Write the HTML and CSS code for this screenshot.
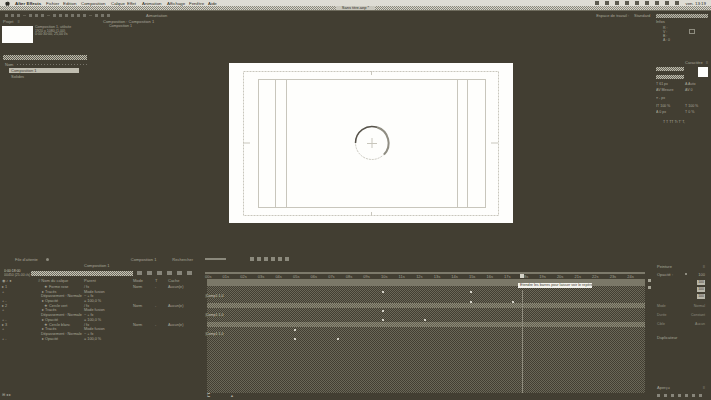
FILE: index.html
```html
<!DOCTYPE html>
<html lang="fr">
<head>
    <meta charset="UTF-8">
    <meta name="viewport" content="width=device-width, initial-scale=1.0">
    <title>After Effects</title>
    <link rel="stylesheet" href="styles.css">
</head>
<body>
    <div class="page">
        <!-- system menu -->
        <div class="menubar">
            <svg class="apple" width="5" height="5" viewBox="0 0 5 5"><path d="M2.5 1.2C1.6.7.4 1 .4 2.4c0 1.2.8 2.4 1.3 2.4.4 0 .5-.2.8-.2s.4.2.8.2c.5 0 1.3-1.200 1.300-2.400C4.600 1 3.400.7 2.500 1.200zM2.500 1C2.500.5 2.900.1 3.300 0c0 .5-.4 1-.8 1z" fill="#2b2a24"/></svg>
            <b class="app">After Effects</b>
            <span class="m1">Fichier</span>
            <span class="m2">Edition</span>
            <span class="m3">Composition</span>
            <span class="m4">Calque</span>
            <span class="m5">Effet</span>
            <span class="m6">Animation</span>
            <span class="m7">Affichage</span>
            <span class="m8">Fenêtre</span>
            <span class="m9">Aide</span>
            <div class="status">
                <i></i><i></i><i></i><i></i><i></i><i></i><i></i><i></i><i></i>
                <span>ven. 13:19</span>
            </div>
        </div>
        <div class="titlebar"><span>Sans titre.aep *</span></div>

        <div class="toolbar">
            <div class="tools">
                <i></i><i></i><i></i><u></u><i></i><i></i><i></i><u></u><i></i><i></i><i></i><i></i><i></i><i></i><u></u><i></i><i></i><i></i>
            </div>
            <span class="snap">Aimantation</span>
            <span class="workspace-label">Espace de travail :</span>
            <span class="workspace-name">Standard</span>
            <div class="search-help"></div>
        </div>

        <div class="upper">
            <section class="project">
                <div class="panel-head">Projet <em>≡</em></div>
                <div class="preview">
                    <div class="thumb"></div>
                    <div class="thumb-info">
                        <span>Composition 1, utilisée</span>
                        <span>1920 x 1080 (1,00)</span>
                        <span>0:00:30:00, 25,00 i/s</span>
                    </div>
                </div>
                <div class="search-box"></div>
                <div class="list-head"><span>Nom</span><span class="dots"></span></div>
                <div class="list-row selected"><span>Composition 1</span></div>
                <div class="list-row"><span>Solides</span></div>
            </section>

            <section class="viewer">
                <div class="viewer-head">
                    <span>Composition : Composition 1</span>
                    <small>Composition 1</small>
                </div>
                <svg class="canvas" width="284" height="160" viewBox="0 0 284 160">
                    <rect width="284" height="160" fill="#fefefc"/>
                    <g fill="none" stroke="#c8c6bc">
                        <rect x="14.5" y="8.5" width="255" height="144" stroke-dasharray="2 1"/>
                        <rect x="29.5" y="16.5" width="227" height="128"/>
                        <path d="M46.5 17v128M57.5 17v128M228.5 17v128M238.5 17v128"/>
                        <path d="M142.5 8v4M142.5 149v4M14 80h7M262 80h7"/>
                        <path d="M143 75v10M138 80.500h10"/>
                    </g>
                    <circle cx="143" cy="80" r="16.500" fill="none" stroke="#c9c7be" stroke-dasharray="2 1"/>
                    <path d="M126.500 80A16.500 16.500 0 0 1 148 64.300" fill="none" stroke="#56524a" stroke-width="1.500"/>
                    <path d="M148 64.300A16.500 16.500 0 0 1 155 91.500" fill="none" stroke="#8f8d82" stroke-width="2"/>
                </svg>
            </section>

            <section class="side">
                <div class="side-head">Infos</div>
                <div class="info-wrap">
                    <div class="info-rows">
                        <span>R :</span><span>V :</span><span>B :</span><span>A : 0</span>
                    </div>
                    <div class="info-box"></div>
                </div>
                <div class="char-head">Caractère <em>≡</em></div>
                <div class="char-font">
                    <div class="field"></div>
                    <div class="field"></div>
                    <div class="swatch"></div>
                </div>
                <div class="char-grid">
                    <span>T 61 px</span><span>A Auto</span>
                    <span>AV Mesure</span><span>AV 0</span>
                    <span class="wide">≡ - px</span>
                    <span>IT 100 %</span><span>T 100 %</span>
                    <span>A 0 px</span><span>T 0 %</span>
                </div>
                <div class="char-style">T T TT Tt T' T,</div>
            </section>
        </div>

        <div class="lower">
            <section class="layers">
                <div class="tl-bar">
                    <span>File d'attente</span>
                    <b></b>
                    <span class="tl-mid">Composition 1</span>
                    <span class="tl-right">Rechercher</span>
                </div>
                <div class="comp-name">Composition 1</div>
                <div class="time-row">
                    <div class="timecode"><strong>0:00:18:00</strong><span>00450 (25.00 i/s)</span></div>
                    <div class="layer-search"></div>
                    <div class="time-icons"><i></i><i></i><i></i><i></i><i></i><i></i></div>
                </div>
                <div class="layer-head">
                    <span>◉ ♪ ●</span><span># Nom du calque</span><span>Parent</span><span>Mode</span><span>T</span><span>Cache</span>
                </div>
                <div class="layer-list">
                    <div class="lrow"><span>▸ 1</span><span class="top">★ Forme rose</span><span>/ fx</span><span>Norm</span><span>-</span><span>Aucun(e)</span></div>
                    <div class="lrow"><span>+</span><span class="sub">▸ Tracés</span><span>Mode fusion</span></div>
                    <div class="lrow"><span></span><span class="sub2">Dépassement : Normale</span><span>~ + fx</span></div>
                    <div class="lrow"><span>+ -</span><span class="sub">▸ Opacité</span><span>= 100,0 %</span></div>
                    <div class="lrow"><span>▸ 2</span><span class="top">★ Cercle vert</span><span>/ fx</span><span>Norm</span><span>-</span><span>Aucun(e)</span></div>
                    <div class="lrow"><span>+</span><span class="sub">▸ Tracés</span><span>Mode fusion</span></div>
                    <div class="lrow"><span></span><span class="sub2">Dépassement : Normale</span><span>~ + fx</span></div>
                    <div class="lrow"><span>+ -</span><span class="sub">▸ Opacité</span><span>= 100,0 %</span></div>
                    <div class="lrow"><span>▸ 3</span><span class="top">★ Cercle blanc</span><span>/ fx</span><span>Norm</span><span>-</span><span>Aucun(e)</span></div>
                    <div class="lrow"><span>+</span><span class="sub">▸ Tracés</span><span>Mode fusion</span></div>
                    <div class="lrow"><span></span><span class="sub2">Dépassement : Normale</span><span>~ + fx</span></div>
                    <div class="lrow"><span>+ -</span><span class="sub">▸ Opacité</span><span>= 100,0 %</span></div>
                </div>
                <div class="layer-foot">⊞ ◂ ▸</div>
            </section>

            <section class="tracks">
                <div class="track-tools"><span class="tt-line"></span><i></i><i></i><i></i><i></i><i></i><i></i></div>
                <div class="work-area"></div>
                <div class="ruler">
                    <span>00s</span><span>01s</span><span>02s</span><span>03s</span><span>04s</span><span>05s</span><span>06s</span><span>07s</span><span>08s</span><span>09s</span><span>10s</span><span>11s</span><span>12s</span><span>13s</span><span>14s</span><span>15s</span><span>16s</span><span>17s</span><span>18s</span><span>19s</span><span>20s</span><span>21s</span><span>22s</span><span>23s</span><span>24s</span>
                </div>
                <div class="track-area">
                    <div class="track-head"></div>
                    <div class="track-gap first"><span class="track-label">Comp1:1,0</span></div>
                    <div class="track-bar"></div>
                    <div class="track-gap"><span class="track-label">Comp1:1,0</span></div>
                    <div class="track-bar"></div>
                    <div class="track-gap"><span class="track-label">Comp1:1,0</span></div>
                    <div class="track-rest"></div>
                    <!-- keyframes, on the time canvas -->
                    <i class="key k1"></i><i class="key k2"></i><i class="key k3"></i><i class="key k4"></i><i class="key k5"></i><i class="key k6"></i><i class="key k7"></i><i class="key k8"></i><i class="key k9"></i><i class="key k10"></i>
                    <div class="cti"></div>
                    <div class="playhead"></div>
                    <div class="tooltip">Etendre les barres pour laisser voir le repère</div>
                </div>
                <i class="tick tick-a"></i><i class="tick tick-b"></i>
                <div class="track-foot"><span>⊏</span><i>▲</i></div>
            </section>

            <section class="side side-low">
                <div class="low-head"><span>Peinture</span><em>≡</em></div>
                <div class="low-sub"><span>Opacité :</span><b></b><span>100</span></div>
                <div class="btns">
                    <span>100</span>
                    <span>100</span>
                    <span>100</span>
                </div>
                <div class="low-row top-gap"><span>Mode</span><span>Normal</span></div>
                <div class="low-row"><span>Durée</span><span>Constant</span></div>
                <div class="low-row"><span>Cible</span><span>Aucun</span></div>
                <div class="low-drop">Duplicateur</div>
                <div class="grow"></div>
                <div class="low-head"><span>Aperçu</span><em>≡</em></div>
                <div class="transport"><i></i><i></i><i></i><i></i><i></i><i></i><i></i></div>
            </section>
        </div>
    </div>
</body>
</html>
```

FILE: styles.css
```css
* {
    box-sizing: border-box;
}
html, body {
    margin: 0;
    padding: 0;
}
body {
    font-family: 'Liberation Sans', Arial, sans-serif;
    font-size: 4px;
    line-height: 5px;
    color: #a9a79a;
    background-color: #423e32;
}
em {
    font-style: normal;
}
.page {
    width: 711px;
    height: 400px;
    overflow: hidden;
    display: flex;
    flex-direction: column;
}

/* menu bar */
.menubar {
    height: 6px;
    display: flex;
    align-items: center;
    padding-left: 5px;
    color: #2b2a24;
    background-color: #dedcd4;
    font-size: 4.400px;
}
.apple {
    margin-right: 5px;
}
.menubar .app {
    width: 31px;
}
.m1 { width: 17px; }
.m2 { width: 18px; }
.m3 { width: 30px; }
.m4 { width: 16px; }
.m5 { width: 15px; }
.m6 { width: 25px; }
.m7 { width: 22px; }
.m8 { width: 19px; }
.m9 { width: 15px; }
.status {
    margin-left: auto;
    display: flex;
    align-items: center;
    gap: 6px;
    padding-right: 5px;
}
.status i {
    width: 4px;
    height: 4px;
    background-color: #5b594e;
}
.titlebar {
    height: 5px;
    display: flex;
    justify-content: center;
    align-items: center;
    color: #2b2a24;
    border-bottom: 1px solid #6e6b5d;
    background: repeating-conic-gradient(#d6d4cb 0 25%, #8a887b 0 50%) 0 0 / 2px 2px;
}
.titlebar span {
    padding: 0 6px;
    background-color: #c9c7bd;
    line-height: 4px;
}

/* toolbar */
.toolbar {
    height: 8px;
    display: flex;
    align-items: center;
    padding: 1px 3px 0 5px;
}
.tools {
    width: 120px;
    display: flex;
    align-items: center;
    gap: 3px;
}
.tools i {
    width: 3px;
    height: 3px;
    background-color: #77756a;
}
.tools u {
    width: 3px;
    height: 1px;
    background-color: #625f52;
}
.snap {
    margin-left: 21px;
}
.workspace-label {
    margin-left: 429px;
}
.workspace-name {
    margin-left: 5px;
}
.search-help {
    width: 52px;
    height: 4px;
    margin-left: auto;
    background: repeating-conic-gradient(#b8b6aa 0 25%, #6f6c5e 0 50%) 0 0 / 2px 2px;
}

/* upper row */
.upper {
    height: 235px;
    display: flex;
}
.project {
    width: 91px;
    padding: 0 2px;
}
.panel-head {
    height: 7px;
    padding-left: 1px;
    display: flex;
    gap: 4px;
}
.preview {
    height: 29px;
    display: flex;
    gap: 2px;
}
.thumb {
    width: 31px;
    height: 17px;
    background-color: #fefefc;
}
.thumb-info {
    display: flex;
    flex-direction: column;
    font-size: 3.600px;
    line-height: 3.500px;
    white-space: nowrap;
}
.search-box {
    width: 84px;
    height: 5px;
    margin-left: 1px;
    background: repeating-conic-gradient(#bdbbae 0 25%, #5f5c4e 0 50%) 0 0 / 2px 2px;
}
.list-head {
    height: 5px;
    margin: 2px 0 0 3px;
    display: flex;
    gap: 4px;
}
.dots {
    flex: 1;
    align-self: center;
    height: 1px;
    background: repeating-linear-gradient(90deg, #77746a 0 1px, transparent 1px 3px);
}
.list-row {
    height: 5px;
    margin: 1px 0 1px 7px;
    width: 70px;
    padding-left: 2px;
}
.list-row.selected {
    background-color: #c0bdb0;
    color: #3b382c;
}

/* comp viewer */
.viewer {
    width: 560px;
    display: flex;
    flex-direction: column;
    align-items: center;
}
.viewer-head {
    width: 100%;
    height: 44px;
    padding-left: 12px;
    display: flex;
    flex-direction: column;
}
.viewer-head small {
    font-size: 3.600px;
    padding-left: 6px;
}
.canvas {
    display: block;
    flex-shrink: 0;
}

/* right column */
.side {
    flex: 1;
    padding: 0 3px 0 5px;
    min-width: 0;
}
.side-head {
    height: 6px;
}
.info-wrap {
    height: 35px;
    display: flex;
    padding-top: 1px;
}
.info-rows {
    width: 33px;
    display: flex;
    flex-direction: column;
    padding-left: 7px;
    font-size: 3.500px;
    line-height: 4px;
}
.info-box {
    width: 6px;
    height: 5px;
    margin-top: 3px;
    border: 1px solid #8e8c7f;
}
.char-head {
    height: 6px;
    display: flex;
    justify-content: flex-end;
    gap: 3px;
    white-space: nowrap;
}
.char-font {
    height: 16px;
    position: relative;
    display: flex;
    flex-direction: column;
    gap: 4px;
    padding-top: 1px;
}
.field {
    width: 28px;
    height: 4px;
    background: repeating-conic-gradient(#bdbbae 0 25%, #6c695b 0 50%) 0 0 / 2px 2px;
}
.swatch {
    position: absolute;
    right: 0;
    top: 1px;
    width: 10px;
    height: 10px;
    background-color: #fefefc;
}
.char-grid {
    display: grid;
    grid-template-columns: 29px 1fr;
    row-gap: 2px;
    font-size: 3.600px;
    line-height: 4px;
    white-space: nowrap;
    overflow: hidden;
}
.char-grid .wide {
    grid-column: 1 / 3;
    margin: 2px 0;
}
.char-style {
    margin-top: 6px;
    padding-left: 7px;
    font-size: 3.600px;
}

/* timeline */
.lower {
    flex: 1;
    min-height: 0;
    display: flex;
}
.layers {
    width: 205px;
    display: flex;
    flex-direction: column;
    flex-shrink: 0;
}
.tl-bar {
    height: 7px;
    margin-top: 2px;
    padding-left: 15px;
    display: flex;
    align-items: center;
    white-space: nowrap;
}
.tl-bar b {
    width: 3px;
    height: 3px;
    margin-left: 8px;
    border-radius: 50%;
    background-color: #8e8c7f;
}
.tl-mid {
    margin-left: 82px;
}
.tl-right {
    margin-left: 16px;
}
.comp-name {
    height: 5px;
    padding-left: 84px;
}
.time-row {
    height: 10px;
    display: flex;
    padding-left: 4px;
    align-items: center;
}
.timecode {
    width: 27px;
    font-size: 3.500px;
    line-height: 4px;
    display: flex;
    flex-direction: column;
    white-space: nowrap;
    overflow: hidden;
}
.timecode strong {
    font-weight: normal;
    color: #c8c6ba;
}
.layer-search {
    width: 102px;
    height: 5px;
    background: repeating-conic-gradient(#c6c4b7 0 25%, #716e60 0 50%) 0 0 / 2px 2px;
}
.time-icons {
    margin-left: 4px;
    display: flex;
    gap: 5px;
}
.time-icons i {
    width: 5px;
    height: 4px;
    background-color: #87857a;
}
.layer-head {
    height: 6px;
    display: grid;
    grid-template-columns: 36px 46px 49px 22px 13px 1fr;
    padding-left: 2px;
    white-space: nowrap;
    color: #a5a395;
}
.layer-list {
    flex: 1;
    padding-top: 1px;
}
.lrow {
    height: 4.700px;
    display: grid;
    grid-template-columns: 36px 46px 49px 22px 13px 1fr;
    padding-left: 2px;
    white-space: nowrap;
    font-size: 3.800px;
}
.lrow .top {
    padding-left: 6px;
}
.lrow .sub {
    padding-left: 4px;
}
.lrow .sub2 {
    padding-left: 3px;
}
.layer-foot {
    height: 8px;
    padding-left: 2px;
}

.tracks {
    width: 440px;
    flex-shrink: 0;
    display: flex;
    flex-direction: column;
    position: relative;
}
.track-tools {
    height: 18px;
    padding-bottom: 8px;
    display: flex;
    align-items: center;
    gap: 3px;
}
.tt-line {
    width: 21px;
    height: 2px;
    margin-right: 21px;
    background-color: #8b897c;
}
.track-tools i {
    width: 4px;
    height: 4px;
    background-color: #8b897c;
}
.work-area {
    height: 2px;
    background-color: #7d7a6b;
}
.ruler {
    height: 5px;
    display: grid;
    grid-template-columns: repeat(25, 17.600px);
    color: #a5a395;
    white-space: nowrap;
}
.track-area {
    height: 114px;
    margin-left: 2px;
    position: relative;
    display: flex;
    flex-direction: column;
}
.track-head {
    height: 7px;
    background-color: #7b7868;
}
.track-gap, .track-rest {
    position: relative;
    background: repeating-conic-gradient(#6a6758 0 25%, #423e32 0 50%) 0 0 / 2px 2px;
}
.track-gap {
    height: 14px;
}
.track-gap.first {
    height: 17px;
}
.track-rest {
    flex: 1;
}
.track-bar {
    height: 5px;
    background: repeating-conic-gradient(#8b887a 0 25%, #65624f 0 50%) 0 0 / 2px 2px;
}
.track-label {
    position: absolute;
    left: -2px;
    bottom: 5px;
    padding: 0 1px;
    width: 19px;
    white-space: nowrap;
    overflow: hidden;
    font-size: 3.600px;
    line-height: 4px;
    color: #d0cec2;
    background-color: #55523f;
}
.key {
    position: absolute;
    width: 2px;
    height: 2px;
    background-color: #d5d3c8;
}
.k1 { left: 175px; top: 12px; }
.k2 { left: 175px; top: 31px; }
.k3 { left: 175px; top: 40px; }
.k4 { left: 217px; top: 40px; }
.k5 { left: 87px; top: 50px; }
.k6 { left: 87px; top: 59px; }
.k7 { left: 130px; top: 59px; }
.k8 { left: 263px; top: 12px; }
.k9 { left: 263px; top: 22px; }
.k10 { left: 305px; top: 22px; }
.playhead {
    position: absolute;
    left: 315px;
    top: 11px;
    bottom: 0;
    width: 1px;
    background-color: #8e8b7c;
}
.cti {
    position: absolute;
    left: 313px;
    top: -5px;
    width: 4px;
    height: 4px;
    background-color: #d5d3c8;
}
.tooltip {
    position: absolute;
    left: 311px;
    top: 4px;
    width: 74px;
    height: 5px;
    padding-left: 2px;
    white-space: nowrap;
    overflow: hidden;
    font-size: 3.700px;
    line-height: 5px;
    color: #3b382c;
    background-color: #f3f2ec;
}
.tick {
    position: absolute;
    left: 443px;
    width: 3px;
    height: 3px;
    background-color: #a5a395;
}
.tick-a { top: 25px; }
.tick-b { top: 32px; }
.track-foot {
    flex: 1;
    display: flex;
    gap: 20px;
    padding-left: 2px;
    font-size: 4px;
}
.track-foot i {
    font-style: normal;
}

/* right column, lower part */
.side-low {
    padding: 10px 6px 2px 12px;
    display: flex;
    flex-direction: column;
}
.low-head {
    display: flex;
    justify-content: space-between;
    height: 5px;
    white-space: nowrap;
}
.low-sub {
    height: 6px;
    margin-top: 2px;
    display: flex;
    justify-content: space-between;
    align-items: center;
    white-space: nowrap;
}
.low-sub b {
    width: 2px;
    height: 2px;
    background-color: #8e8c7f;
}
.btns {
    margin-top: 3px;
    display: flex;
    flex-direction: column;
    align-items: flex-end;
    gap: 2px;
}
.btns span {
    width: 8px;
    height: 5px;
    text-align: center;
    font-size: 3.400px;
    background-color: #b8b6a9;
    color: #3b382c;
}
.low-row {
    height: 9px;
    display: flex;
    justify-content: space-between;
    font-size: 3.500px;
    color: #8e8c7f;
}
.top-gap {
    margin-top: 5px;
}
.low-drop {
    height: 6px;
    margin-top: 4px;
    white-space: nowrap;
}
.grow {
    flex: 1;
}
.transport {
    height: 6px;
    display: flex;
    align-items: center;
    gap: 4px;
    margin-top: 2px;
}
.transport i {
    width: 3px;
    height: 3px;
    background-color: #87857a;
}
```
